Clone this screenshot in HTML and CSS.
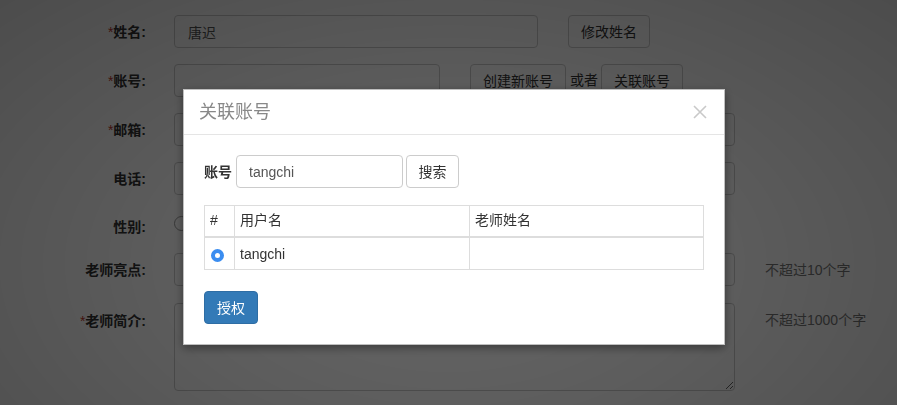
FILE: index.html
```html
<!DOCTYPE html>
<html lang="zh-CN">
<head>
    <meta charset="UTF-8">
    <title>老师信息</title>
    <link rel="stylesheet" href="styles.css">
</head>
<body>

<div class="form">
    <div class="row">
        <label class="label"><span class="req">*</span>姓名:</label>
        <input class="control w-name" type="text" value="唐迟">
        <button class="btn gap-left">修改姓名</button>
    </div>
    <div class="row">
        <label class="label"><span class="req">*</span>账号:</label>
        <input class="control w-account" type="text">
        <button class="btn gap-left">创建新账号</button>
        <span class="or">或者</span>
        <button class="btn">关联账号</button>
    </div>
    <div class="row">
        <label class="label"><span class="req">*</span>邮箱:</label>
        <input class="control w-full" type="text">
    </div>
    <div class="row">
        <label class="label">电话:</label>
        <input class="control w-full" type="text">
    </div>
    <div class="row row-short">
        <label class="label">性别:</label>
        <span class="radio-ring"></span>
    </div>
    <div class="row row-before-area">
        <label class="label">老师亮点:</label>
        <input class="control w-full" type="text">
        <span class="help">不超过10个字</span>
    </div>
    <div class="row row-top">
        <label class="label"><span class="req">*</span>老师简介:</label>
        <textarea class="control w-full area"></textarea>
        <span class="help">不超过1000个字</span>
    </div>
</div>

<div class="backdrop"></div>

<div class="modal">
    <div class="modal-header">
        <h4 class="modal-title">关联账号</h4>
        <span class="close">
            <svg width="14" height="14" viewBox="0 0 14 14">
                <path d="M1 1 L13 13 M13 1 L1 13" stroke="#c9c9c9" stroke-width="1.6" fill="none"/>
            </svg>
        </span>
    </div>
    <div class="modal-body">
        <div class="search">
            <label class="search-label">账号</label>
            <input class="search-input" type="text" value="tangchi">
            <button class="btn search-btn">搜索</button>
        </div>
        <table class="users">
            <thead>
                <tr>
                    <th class="col-check">#</th>
                    <th class="col-user">用户名</th>
                    <th>老师姓名</th>
                </tr>
            </thead>
            <tbody>
                <tr>
                    <td><span class="radio-on"></span></td>
                    <td>tangchi</td>
                    <td></td>
                </tr>
            </tbody>
        </table>
        <button class="btn btn-primary">授权</button>
    </div>
</div>

</body>
</html>
```

FILE: styles.css
```css
body {
    margin: 0;
    padding: 0;
    background: #fff;
    color: #333;
    font-family: "Liberation Sans", "Noto Sans CJK SC", sans-serif;
    font-size: 14px;
    line-height: 20px;
    width: 897px;
    height: 405px;
    overflow: hidden;
}
.form {
    padding-top: 15px;
}
.row {
    display: flex;
    align-items: center;
    height: 33px;
    margin-bottom: 16px;
}
.row-short {
    height: 32px;
    margin-bottom: 10px;
}
.row-before-area {
    margin-bottom: 17px;
}
.row-top {
    align-items: flex-start;
    height: auto;
}
.row-top .label,
.row-top .help {
    margin-top: 8px;
}
.row-top .help {
    margin-top: 7px;
}
.label {
    width: 146px;
    text-align: right;
    font-weight: bold;
    color: #333;
    flex-shrink: 0;
}
.req {
    color: #c0392b;
    font-weight: normal;
}
.control {
    box-sizing: border-box;
    height: 33px;
    margin: 0 0 0 28px;
    padding: 6px 13px;
    border: 1px solid #ccc;
    border-radius: 4px;
    background: #fff;
    color: #555;
    font: inherit;
}
.w-name {
    width: 364px;
}
.w-account {
    width: 266px;
}
.w-full {
    width: 561px;
}
.area {
    height: 88px;
    resize: vertical;
}
.btn {
    box-sizing: border-box;
    height: 33px;
    padding: 6px 12px;
    border: 1px solid #ccc;
    border-radius: 4px;
    background: #fff;
    color: #333;
    font: inherit;
    line-height: 20px;
}
.gap-left {
    margin-left: 30px;
}
.or {
    margin: 0 3px 0 4px;
    position: relative;
    top: -1px;
}
.help {
    margin-left: 30px;
    color: #777;
}
.radio-ring {
    box-sizing: border-box;
    width: 15px;
    height: 15px;
    margin: -8px 0 0 28px;
    border: 1px solid #999;
    border-radius: 50%;
    background: #fff;
}

.backdrop {
    position: fixed;
    left: 0;
    top: 0;
    right: 0;
    bottom: 0;
    background: radial-gradient(ellipse at 50% 65%, rgba(0, 0, 0, 0.6) 0%, rgba(0, 0, 0, 0.64) 45%, rgba(0, 0, 0, 0.7) 100%);
}
.modal {
    position: fixed;
    left: 183px;
    top: 89px;
    box-sizing: border-box;
    width: 542px;
    background: #fff;
    border: 1px solid rgba(0, 0, 0, 0.25);
    box-shadow: 0 3px 9px rgba(0, 0, 0, 0.4);
}
.modal-header {
    display: flex;
    align-items: center;
    justify-content: space-between;
    height: 44px;
    padding: 0 17px 0 15px;
    border-bottom: 1px solid #e5e5e5;
}
.modal-title {
    margin: 0;
    font-size: 18px;
    font-weight: normal;
    color: #888;
}
.close {
    display: flex;
    margin-top: -1px;
}
.modal-body {
    padding: 20px;
}
.search {
    display: flex;
    align-items: center;
}
.search-label {
    font-weight: bold;
    margin-right: 4px;
}
.search-input {
    box-sizing: border-box;
    width: 167px;
    height: 33px;
    padding: 6px 12px;
    border: 1px solid #ccc;
    border-radius: 4px;
    color: #555;
    font: inherit;
}
.search-btn {
    margin-left: 3px;
    width: 53px;
    padding: 6px 0;
}
.users {
    width: 500px;
    margin: 17px 0 21px;
    border-collapse: collapse;
    border: 1px solid #ddd;
}
.users th,
.users td {
    border: 1px solid #ddd;
    text-align: left;
    vertical-align: middle;
    padding: 5px 5px;
    font-weight: normal;
    color: #333;
}
.users th {
    height: 20px;
    padding-top: 4px;
    padding-bottom: 6px;
    border-bottom-width: 2px;
}
.users td {
    height: 21px;
}
.col-check {
    width: 19px;
}
.col-user {
    width: 224px;
}
.radio-on {
    display: block;
    box-sizing: border-box;
    width: 13px;
    height: 13px;
    margin: 3px 0 0 1px;
    border-radius: 50%;
    border: 4.5px solid #3b8df0;
    background: #fff;
}
.btn-primary {
    width: 54px;
    padding: 6px 0;
    background: #337ab7;
    border-color: #2e6da4;
    color: #fff;
}
```
